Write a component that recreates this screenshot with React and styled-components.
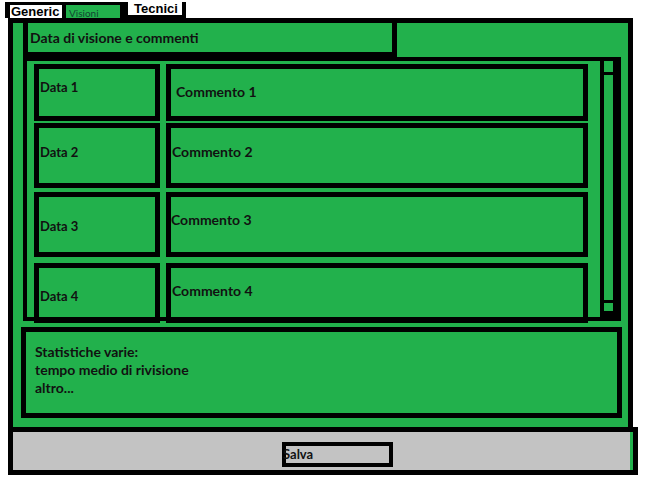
import React from "react";
import styled, { createGlobalStyle } from "styled-components";

const GREEN = "#22b14c";

const GlobalStyle = createGlobalStyle`
  html, body {
    margin: 0;
    padding: 0;
    background: #fff;
  }
  body {
    font-family: Lato, "Liberation Sans", sans-serif;
    color: #111;
  }
`;

const righe = [
  { data: "Data 1", commento: "Commento 1", h: 57, gap: 2, dTop: 10, cTop: 15, cLeft: 5 },
  { data: "Data 2", commento: "Commento 2", h: 65, gap: 4, dTop: 16, cTop: 16, cLeft: 1 },
  { data: "Data 3", commento: "Commento 3", h: 65, gap: 6, dTop: 21, cTop: 15, cLeft: 0 },
  { data: "Data 4", commento: "Commento 4", h: 60, gap: 0, dTop: 20, cTop: 15, cLeft: 1 },
];

const App = () => {
  return (
    <>
      <GlobalStyle />
      <Page>
        <TabBar>
          <Tab>Generic</Tab>
          <ActiveTab>Visioni</ActiveTab>
          <TopTab>Tecnici</TopTab>
        </TabBar>

        <Frame>
          <Header>Data di visione e commenti</Header>

          <List>
            <Rows>
              {righe.map((r) => (
                <Row key={r.data} h={r.h} gap={r.gap}>
                  <DataBox top={r.dTop}>{r.data}</DataBox>
                  <CommentBox top={r.cTop} left={r.cLeft}>
                    {r.commento}
                  </CommentBox>
                </Row>
              ))}
            </Rows>
            <Scrollbar>
              <ScrollBtn />
              <Track />
              <ScrollBtn bottom />
            </Scrollbar>
          </List>

          <Stats>
            <div>Statistiche varie:</div>
            <div>tempo medio di rivisione</div>
            <div>altro...</div>
          </Stats>
        </Frame>

        <Footer>
          <SaveBtn>
            <span>Salva</span>
          </SaveBtn>
        </Footer>
      </Page>
    </>
  );
};

export default App;

const Page = styled.div`
  width: 655px;
  height: 481px;
  padding-top: 2px;
  box-sizing: border-box;
  overflow: hidden;
`;

const TabBar = styled.div`
  display: flex;
  align-items: flex-start;
  margin-left: 5px;
  width: 181px;
  height: 16px;
  background: #000;
  box-sizing: border-box;
  padding: 3px 0 0 5px;
`;

const Tab = styled.div`
  width: 52px;
  height: 13px;
  background: #fff;
  color: #000;
  font-family: "Liberation Sans", sans-serif;
  font-weight: 700;
  font-size: 13px;
  line-height: 13px;
  white-space: nowrap;
  padding-left: 1px;
  box-sizing: border-box;
`;

const ActiveTab = styled.div`
  width: 54px;
  height: 13px;
  margin-left: 4px;
  background: ${GREEN};
  font-size: 10px;
  line-height: 10px;
  padding: 3px 0 0 3px;
  box-sizing: border-box;
  color: #143;
  white-space: nowrap;
`;

const TopTab = styled(Tab)`
  width: 54px;
  margin-left: 8px;
  margin-top: -3px;
  line-height: 13px;
  padding-left: 6px;
`;

const Frame = styled.div`
  margin-left: 8px;
  width: 625px;
  height: 409px;
  box-sizing: border-box;
  border: 5px solid #000;
  border-bottom: none;
  background: ${GREEN};
  padding-left: 10px;
`;

const Header = styled.div`
  width: 374px;
  height: 34px;
  box-sizing: border-box;
  border: 5px solid #000;
  border-top: none;
  padding: 6px 0 0 2px;
  font-size: 14px;
  font-weight: 700;
  line-height: 18px;
  white-space: nowrap;
`;

const List = styled.div`
  display: flex;
  width: 598px;
  height: 264px;
  box-sizing: border-box;
  border: 4px solid #000;
  padding: 3px 0 0 7px;
`;

const Rows = styled.div`
  display: flex;
  flex-direction: column;
`;

const Row = styled.div`
  display: flex;
  gap: 6px;
  height: ${(p) => p.h}px;
  margin-bottom: ${(p) => p.gap}px;
  flex-shrink: 0;
`;

const DataBox = styled.div`
  width: 126px;
  box-sizing: border-box;
  border: 5px solid #000;
  padding: ${(p) => p.top}px 0 0 1px;
  font-size: 13px;
  font-weight: 700;
  line-height: 16px;
`;

const CommentBox = styled.div`
  width: 422px;
  box-sizing: border-box;
  border: 5px solid #000;
  padding: ${(p) => p.top}px 0 0 ${(p) => p.left}px;
  font-size: 14px;
  font-weight: 700;
  line-height: 16px;
`;

const Scrollbar = styled.div`
  display: flex;
  flex-direction: column;
  width: 17px;
  height: 256px;
  margin: -3px 0 0 12px;
  box-sizing: border-box;
  border-left: 4px solid #000;
  border-right: 4px solid #000;
  padding-top: 3px;
`;

const ScrollBtn = styled.div`
  height: 8px;
  border-top: ${(p) => (p.bottom ? "3px solid #000" : "none")};
  border-bottom: ${(p) => (p.bottom ? "6px solid #000" : "3px solid #000")};
  background: ${GREEN};
`;

const Track = styled.div`
  flex: 1;
`;

const Stats = styled.div`
  width: 601px;
  height: 91px;
  margin: 6px 0 0 -2px;
  box-sizing: border-box;
  border: 5px solid #000;
  padding: 11px 0 0 9px;
  font-size: 14px;
  font-weight: 700;
  line-height: 18px;
`;

const Footer = styled.div`
  margin-left: 8px;
  width: 630px;
  height: 48px;
  box-sizing: border-box;
  border: 5px solid #000;
  background: #c3c3c3;
  box-shadow: inset -3px 0 0 ${GREEN};
  padding: 10px 0 0 269px;
`;

const SaveBtn = styled.div`
  width: 111px;
  height: 25px;
  box-sizing: border-box;
  border: 4px solid #000;
  font-size: 13px;
  font-weight: 700;
  line-height: 17px;

  span {
    margin-left: -3px;
  }
`;
